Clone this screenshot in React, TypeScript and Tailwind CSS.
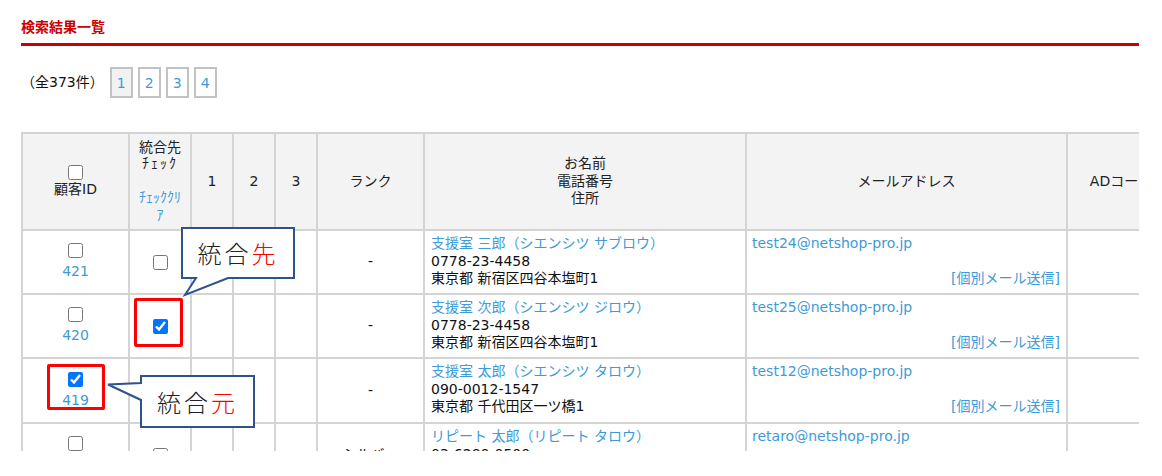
import React from "react";

type Row = {
  id: number;
  idChecked: boolean;
  destChecked: boolean;
  name: string;
  tel: string;
  addr: string;
  email: string;
  rank: string;
  h: string;
};

const rows: Row[] = [
  { id: 421, idChecked: false, destChecked: false, name: "支援室 三郎（シエンシツ サブロウ）", tel: "0778-23-4458", addr: "東京都 新宿区四谷本塩町1", email: "test24@netshop-pro.jp", rank: "-", h: "h-[64px]" },
  { id: 420, idChecked: false, destChecked: true, name: "支援室 次郎（シエンシツ ジロウ）", tel: "0778-23-4458", addr: "東京都 新宿区四谷本塩町1", email: "test25@netshop-pro.jp", rank: "-", h: "h-[64px]" },
  { id: 419, idChecked: true, destChecked: false, name: "支援室 太郎（シエンシツ タロウ）", tel: "090-0012-1547", addr: "東京都 千代田区一ツ橋1", email: "test12@netshop-pro.jp", rank: "-", h: "h-[65px]" },
  { id: 418, idChecked: false, destChecked: false, name: "リピート 太郎（リピート タロウ）", tel: "03-6280-0500", addr: "東京都 千代田区一ツ橋2", email: "retaro@netshop-pro.jp", rank: "シルバー", h: "h-[64px]" },
];

const th = "bg-[#f3f3f3] border-r-2 border-b-2 border-[#d4d4d4] font-normal text-center align-middle p-0 h-[97px] leading-[17.5px] text-[#222]";
const td = "border-r-2 border-b-2 border-[#d4d4d4] p-0 align-middle leading-[17.5px] whitespace-nowrap";

function Box({ checked }: { checked: boolean }) {
  return <input type="checkbox" defaultChecked={checked} className="block w-[15px] h-[15px] m-0 mx-auto accent-[#0075ff]" />;
}

export default function App() {
  return (
    <div className="relative w-[1162px] h-[476px] bg-white overflow-hidden font-['DejaVu_Sans','Noto_Sans_CJK_JP',sans-serif] text-[14px] text-[#111]">
      <div className="pt-[17px] pl-[21px] w-[1139px]">
        <h2 className="text-[14px] leading-[20px] font-bold text-[#cc0000] pb-[6px] border-b-[3px] border-[#cc0000]">検索結果一覧</h2>
        <div className="mt-[21px] flex items-center h-[31px]">
          <span className="leading-[17px]">（全373件）</span>
          <div className="ml-[6px] flex gap-[5px]">
            {[1, 2, 3, 4].map((n) => (
              <span
                key={n}
                className={
                  "w-[23px] h-[31px] flex items-center justify-center border-2 border-[#c2c2c2] text-[#3e9ad8] leading-none " +
                  (n === 1 ? "bg-[#f1f3f3]" : "bg-white")
                }
              >
                {n}
              </span>
            ))}
          </div>
        </div>
        <div className="mt-[34px] w-[1118px] h-[319px] overflow-hidden">
          <table className="table-fixed border-separate border-spacing-0 w-[1155px] border-l-2 border-t-2 border-[#d4d4d4]">
            <thead>
              <tr>
                <th className={th + " w-[107px]"}>
                  <Box checked={false} />
                  <div className="mt-[1px]">顧客ID</div>
                </th>
                <th className={th + " w-[62px]"}>
                  <div className="leading-[16px]">統合先</div>
                  <div className="leading-[16px] tracking-[2px]">ﾁｪｯｸ</div>
                  <div className="mt-[18px] text-[#3e9ad8]">ﾁｪｯｸｸﾘ<br />ｱ</div>
                </th>
                <th className={th + " w-[42px]"}>1</th>
                <th className={th + " w-[42px]"}>2</th>
                <th className={th + " w-[42px]"}>3</th>
                <th className={th + " w-[107px]"}>ランク</th>
                <th className={th + " w-[322px]"}>
                  お名前<br />電話番号<br />住所
                </th>
                <th className={th + " w-[321px]"}>メールアドレス</th>
                <th className={th + " w-[108px]"}>ADコード</th>
              </tr>
            </thead>
            <tbody>
              {rows.map((r) => (
                <tr key={r.id}>
                  <td className={td + " text-center " + r.h}>
                    <Box checked={r.idChecked} />
                    <div className="mt-[5px] text-[#3e9ad8]">{r.id}</div>
                  </td>
                  <td className={td}>
                    <Box checked={r.destChecked} />
                  </td>
                  <td className={td}></td>
                  <td className={td}></td>
                  <td className={td}></td>
                  <td className={td + " text-center"}>{r.rank}</td>
                  <td className={td + " align-top pt-[4px] pl-[6px]"}>
                    <div className="text-[#3e9ad8]">{r.name}</div>
                    <div>{r.tel}</div>
                    <div>{r.addr}</div>
                  </td>
                  <td className={td + " align-top pt-[4px] pl-[5px] pr-[6px]"}>
                    <div className="text-[#3e9ad8]">{r.email}</div>
                    <div className="h-[17.5px]"></div>
                    <div className="text-right text-[#3e9ad8]">[個別メール送信]</div>
                  </td>
                  <td className={td}></td>
                </tr>
              ))}
            </tbody>
          </table>
        </div>
      </div>

      {/* Highlight boxes */}
      <div className="absolute left-[134px] top-[298px] w-[49px] h-[49px] border-[3px] border-[#ff0000] rounded-[2px]"></div>
      <div className="absolute left-[47px] top-[364px] w-[58px] h-[46px] border-[3px] border-[#ff0000] rounded-[2px]"></div>

      {/* Callout 統合先 */}
      <svg className="absolute left-[178px] top-[224px]" width="120" height="75" viewBox="0 0 120 75">
        <path d="M4,4 H116 V54 H50 L7,71 L18,54 H4 Z" fill="#ffffff" stroke="#2f528f" strokeWidth="2" />
      </svg>
      <div className="absolute left-[182px] top-[228px] w-[112px] h-[50px] flex items-center justify-center text-[24px] font-light tracking-[3px] text-[#222] leading-none font-['Noto_Sans_CJK_JP',sans-serif]">
        統合<span className="text-[#ff0000]">先</span>
      </div>

      {/* Callout 統合元 */}
      <svg className="absolute left-[104px] top-[372px]" width="155" height="60" viewBox="0 0 155 60">
        <path d="M37,4 H150 V55 H37 V28 L4,12.5 L37,11 Z" fill="#ffffff" stroke="#2f528f" strokeWidth="2" />
      </svg>
      <div className="absolute left-[141px] top-[376px] w-[113px] h-[51px] flex items-center justify-center text-[24px] font-light tracking-[3px] text-[#222] leading-none font-['Noto_Sans_CJK_JP',sans-serif]">
        統合<span className="text-[#ff0000]">元</span>
      </div>
    </div>
  );
}
